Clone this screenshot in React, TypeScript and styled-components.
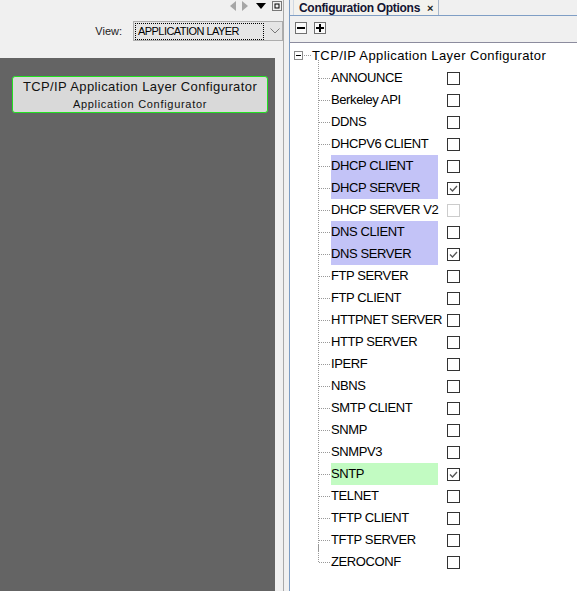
import React from 'react'
import styled, { createGlobalStyle } from 'styled-components';

const GlobalStyle = createGlobalStyle`
  html, body {
    margin: 0;
    padding: 0;
    background: #f0f0f0;
  }
  body {
    font-family: "Liberation Sans", Arial, sans-serif;
    color: #000;
  }
`

interface OptionItem {
  name: string,
  checked?: boolean,
  disabled?: boolean,
  mark?: 'blue' | 'green',
}

const options: OptionItem[] = [
  { name: 'ANNOUNCE' },
  { name: 'Berkeley API' },
  { name: 'DDNS' },
  { name: 'DHCPV6 CLIENT' },
  { name: 'DHCP CLIENT', mark: 'blue' },
  { name: 'DHCP SERVER', mark: 'blue', checked: true },
  { name: 'DHCP SERVER V2', disabled: true },
  { name: 'DNS CLIENT', mark: 'blue' },
  { name: 'DNS SERVER', mark: 'blue', checked: true },
  { name: 'FTP SERVER' },
  { name: 'FTP CLIENT' },
  { name: 'HTTPNET SERVER' },
  { name: 'HTTP SERVER' },
  { name: 'IPERF' },
  { name: 'NBNS' },
  { name: 'SMTP CLIENT' },
  { name: 'SNMP' },
  { name: 'SNMPV3' },
  { name: 'SNTP', mark: 'green', checked: true },
  { name: 'TELNET' },
  { name: 'TFTP CLIENT' },
  { name: 'TFTP SERVER' },
  { name: 'ZEROCONF' },
]

const markColors = {
  blue: '#c3c3f7',
  green: '#c2fbc2',
}

const Window = styled.div`
  display: flex;
  width: 577px;
  height: 591px;
  overflow: hidden;
  background: #f0f0f0;
`

const LeftPanel = styled.div`
  width: 283px;
  display: flex;
  flex-direction: column;
  border-right: 1px solid #a9a9a9;
`

const LeftHeader = styled.div`
  height: 58px;
  display: flex;
  flex-direction: column;
  align-items: flex-end;
`

const NavIcons = styled.div`
  display: flex;
  align-items: center;
  gap: 6px;
  height: 11px;
  padding-right: 1px;

  svg{
    display: block;
  }
`

const ViewRow = styled.div`
  display: flex;
  align-items: center;
  margin-top: 10px;
  gap: 11px;
`

const ViewLabel = styled.span`
  font-size: 11px;
  color: #222;
`

const Dropdown = styled.div`
  width: 150px;
  height: 20px;
  box-sizing: border-box;
  border: 1px solid #adadad;
  background: #e5e5e5;
  display: flex;
  align-items: center;
  padding-left: 2px;
  gap: 5px;
`

const DropdownValue = styled.span`
  flex: 1;
  height: 15px;
  line-height: 15px;
  outline: 1px dotted #000;
  font-size: 11px;
  letter-spacing: -0.55px;
  padding-left: 2px;
  color: #000;
`

const Chevron = styled.span`
  width: 14px;
  display: flex;
  justify-content: center;
`

const Canvas = styled.div`
  flex: 1;
  display: flex;
`

const DarkArea = styled.div`
  width: 275px;
  background: #646464;
  padding: 18px 0 0 12px;
  box-sizing: border-box;
`

const ConfiguratorBox = styled.div`
  width: 256px;
  height: 37px;
  box-sizing: border-box;
  border: 1px solid #22e022;
  border-radius: 3px;
  background: #d9d9d9;
  display: flex;
  flex-direction: column;
  align-items: center;
  color: #111;
`

const BoxTitle = styled.div`
  font-size: 13px;
  letter-spacing: 0.4px;
  margin-top: 2px;
  line-height: 16px;
`

const BoxSubtitle = styled.div`
  font-size: 11px;
  letter-spacing: 0.7px;
  margin-top: 3px;
  line-height: 13px;
`

const Splitter = styled.div`
  width: 5px;
`

const RightPanel = styled.div`
  flex: 1;
  display: flex;
  flex-direction: column;
  border-left: 1px solid #7b9bc2;
`

const TabBar = styled.div`
  height: 15px;
  border-bottom: 1px solid #7f9ec5;
  display: flex;
  padding-left: 3px;
`

const Tab = styled.div`
  display: flex;
  align-items: center;
  gap: 7px;
  padding: 0 5px 0 5px;
  background: #f3f2ee;
  border-right: 1px solid #a8b8cc;
  border-left: 1px solid #d0d8e2;
  font-size: 12px;
  font-weight: bold;
  letter-spacing: -0.3px;
  color: #141432;
`

const CloseMark = styled.span`
  font-size: 11px;
  font-weight: bold;
  color: #222;
`

const Toolbar = styled.div`
  height: 26px;
  display: flex;
  align-items: center;
  gap: 7px;
  padding-left: 5px;
`

const ToolButton = styled.div`
  width: 10px;
  height: 10px;
  border: 1px solid #707070;
  background: #fafafa;
  display: flex;
  align-items: center;
  justify-content: center;
  margin-top: -3px;
`

const TreeArea = styled.div`
  flex: 1;
  background: #fff;
  border-top: 1px solid #8c8c9e;
  padding-top: 1px;
`

const RootRow = styled.div`
  height: 22px;
  display: flex;
  align-items: center;
  padding-left: 4px;
  font-size: 13px;
  letter-spacing: 0.4px;
`

const Expander = styled.div`
  width: 7px;
  height: 7px;
  border: 1px solid #8a8a8a;
  display: flex;
  align-items: center;
  justify-content: center;
  background: #fff;

  &::after{
    content: '';
    width: 5px;
    height: 1px;
    background: #000;
  }
`

const RootStub = styled.div`
  width: 7px;
  border-top: 1px dotted #999;
  margin: 0 1px 0 1px;
`

const ChildList = styled.div`
  display: flex;
  flex-direction: column;
  margin-top: 1px;
`

const ChildRow = styled.div`
  height: 22px;
  display: flex;
  align-items: center;
  padding-left: 28px;
`

const Connector = styled.div<{ $last?: boolean }>`
  position: relative;
  width: 13px;
  height: 22px;

  &::before{
    content: '';
    position: absolute;
    left: 0;
    top: -7px;
    height: ${p => p.$last ? '18px' : '29px'};
    border-left: 1px dotted #999;
  }

  &::after{
    content: '';
    position: absolute;
    left: 1px;
    top: 11px;
    width: 11px;
    border-top: 1px dotted #999;
  }
`

const Label = styled.div<{ $mark?: 'blue' | 'green' }>`
  width: 107px;
  height: 22px;
  line-height: 22px;
  font-size: 13px;
  letter-spacing: -0.4px;
  white-space: nowrap;
  background: ${p => p.$mark ? markColors[p.$mark] : 'transparent'};
`

const CheckBox = styled.div<{ $disabled?: boolean }>`
  width: 11px;
  height: 11px;
  margin-left: 9px;
  border: 1px solid ${p => p.$disabled ? '#cccccc' : '#333333'};
  background: #fff;
  display: flex;
  align-items: center;
  justify-content: center;
`

function CheckMark() {
  return (
    <svg width="9" height="9" viewBox="0 0 9 9">
      <path d="M1 4.5 L3.5 7 L8 2" fill="none" stroke="#555" strokeWidth="1.3" />
    </svg>
  )
}

function TopIcons() {
  return (
    <NavIcons>
      <svg width="6" height="10" viewBox="0 0 6 10"><path d="M6 0 L0 5 L6 10 Z" fill="#a6a6a6" /></svg>
      <svg width="6" height="10" viewBox="0 0 6 10"><path d="M0 0 L6 5 L0 10 Z" fill="#a6a6a6" /></svg>
      <svg width="10" height="6" viewBox="0 0 10 6" style={{ marginLeft: 2 }}><path d="M0 0 L10 0 L5 6 Z" fill="#000" /></svg>
      <svg width="10" height="10" viewBox="0 0 10 10">
        <rect x="0.5" y="0.5" width="9" height="9" fill="none" stroke="#000" strokeDasharray="1 1" />
        <rect x="3" y="3" width="4" height="4" fill="none" stroke="#000" />
      </svg>
    </NavIcons>
  )
}

export default function App() {
  return (
    <>
      <GlobalStyle />
      <Window>
        <LeftPanel>
          <LeftHeader>
            <TopIcons />
            <ViewRow>
              <ViewLabel>View:</ViewLabel>
              <Dropdown>
                <DropdownValue>APPLICATION LAYER</DropdownValue>
                <Chevron>
                  <svg width="10" height="6" viewBox="0 0 10 6">
                    <path d="M0.5 0.5 L5 5 L9.5 0.5" fill="none" stroke="#777" />
                  </svg>
                </Chevron>
              </Dropdown>
            </ViewRow>
          </LeftHeader>
          <Canvas>
            <DarkArea>
              <ConfiguratorBox>
                <BoxTitle>TCP/IP Application Layer Configurator</BoxTitle>
                <BoxSubtitle>Application Configurator</BoxSubtitle>
              </ConfiguratorBox>
            </DarkArea>
          </Canvas>
        </LeftPanel>
        <Splitter />
        <RightPanel>
          <TabBar>
            <Tab>
              Configuration Options
              <CloseMark>×</CloseMark>
            </Tab>
          </TabBar>
          <Toolbar>
            <ToolButton>
              <svg width="8" height="8" viewBox="0 0 8 8"><rect x="0" y="3" width="8" height="2" fill="#000" /></svg>
            </ToolButton>
            <ToolButton>
              <svg width="8" height="8" viewBox="0 0 8 8">
                <rect x="0" y="3" width="8" height="2" fill="#000" />
                <rect x="3" y="0" width="2" height="8" fill="#000" />
              </svg>
            </ToolButton>
          </Toolbar>
          <TreeArea>
            <RootRow>
              <Expander />
              <RootStub />
              TCP/IP Application Layer Configurator
            </RootRow>
            <ChildList>
              {options.map((opt, i) => (
                <ChildRow key={opt.name}>
                  <Connector $last={i === options.length - 1} />
                  <Label $mark={opt.mark}>{opt.name}</Label>
                  <CheckBox $disabled={opt.disabled}>
                    {opt.checked && <CheckMark />}
                  </CheckBox>
                </ChildRow>
              ))}
            </ChildList>
          </TreeArea>
        </RightPanel>
      </Window>
    </>
  )
}
